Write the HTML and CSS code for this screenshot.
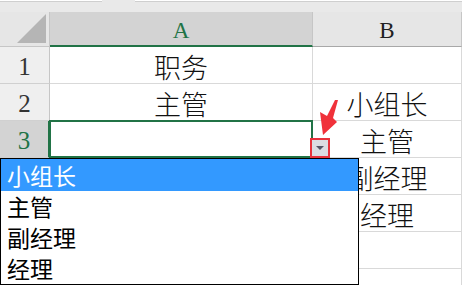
FILE: index.html
```html
<!DOCTYPE html>
<html>
<head>
<meta charset="utf-8">
<link rel="stylesheet" href="styles.css">
</head>
<body>
<div class="app">
  <div class="topstrip">
    <div class="box box-name"></div>
    <div class="box box-formula"></div>
  </div>
  <div class="sheet">
    <div class="corner"><div class="tri"></div></div>
    <div class="colhead sel">A</div>
    <div class="colhead">B</div>

    <div class="rowhead">1</div>
    <div class="cell a">职务</div>
    <div class="cell b"></div>

    <div class="rowhead">2</div>
    <div class="cell a">主管</div>
    <div class="cell b">小组长</div>

    <div class="rowhead sel">3</div>
    <div class="cell a active"></div>
    <div class="cell b">主管</div>

    <div class="rowhead">4</div>
    <div class="cell a"></div>
    <div class="cell b">副经理</div>

    <div class="rowhead">5</div>
    <div class="cell a"></div>
    <div class="cell b">经理</div>

    <div class="rowhead">6</div>
    <div class="cell a"></div>
    <div class="cell b"></div>

    <div class="rowhead">7</div>
    <div class="cell a"></div>
    <div class="cell b"></div>
  </div>

  <div class="dd-btn"><span class="caret"></span></div>
  <svg class="arrow" width="462" height="285" viewBox="0 0 462 285">
    <polygon points="338,100 333,118 337,122 323,135 320,112 327,116 335,100" fill="#f0313a"/>
  </svg>

  <ul class="dropdown">
    <li class="hl">小组长</li>
    <li>主管</li>
    <li>副经理</li>
    <li>经理</li>
  </ul>
</div>
</body>
</html>
```
FILE: styles.css
```css
html, body {
  margin: 0;
  padding: 0;
  background: #ffffff;
}
.app {
  position: relative;
  width: 462px;
  height: 285px;
  overflow: hidden;
  font-family: "Noto Sans CJK SC", sans-serif;
}
.topstrip {
  height: 12px;
  background: #e9e9e9;
  display: flex;
  gap: 33px;
  align-items: flex-start;
}
.box {
  height: 1px;
  background: #ffffff;
  border-bottom: 1px solid #cfcfcf;
}
.box-name { width: 102px; }
.box-formula { flex: 1; }

.sheet {
  display: grid;
  grid-template-columns: 50px 263px 149px;
  grid-template-rows: 35px repeat(7, 37px);
}
.corner {
  background: #e6e6e6;
  border-right: 1px solid #c6c6c6;
  border-bottom: 1px solid #c6c6c6;
  position: relative;
  box-sizing: border-box;
}
.tri {
  position: absolute;
  right: 3px;
  bottom: 3px;
  width: 0;
  height: 0;
  border-left: 29px solid transparent;
  border-bottom: 29px solid #b5b5b5;
}
.colhead {
  background: #e6e6e6;
  box-sizing: border-box;
  border-right: 1px solid #c6c6c6;
  border-bottom: 1px solid #a8a8a8;
  display: flex;
  align-items: center;
  justify-content: center;
  padding-top: 4px;
  font-family: "Liberation Serif", serif;
  font-size: 23px;
  color: #222;
}
.colhead.sel {
  background: #d3d3d3;
  border-bottom: 2px solid #217346;
  color: #217346;
}
.rowhead {
  background: #efefef;
  box-sizing: border-box;
  border-right: 1px solid #c6c6c6;
  border-bottom: 1px solid #d0d0d0;
  display: flex;
  align-items: center;
  justify-content: center;
  padding-top: 4px;
  font-family: "Liberation Serif", serif;
  font-size: 25px;
  color: #333;
}
.rowhead.sel {
  background: #d3d3d3;
  border-right: 2px solid #217346;
  color: #217346;
}
.cell {
  box-sizing: border-box;
  border-right: 1px solid #d9d9d9;
  border-bottom: 1px solid #d9d9d9;
  display: flex;
  align-items: flex-end;
  justify-content: center;
  font-size: 27px;
  line-height: 33px;
  color: #111;
  font-weight: 300;
}
.cell.active {
  border: 2px solid #217346;
  margin-left: -1px;
  margin-top: -1px;
}

.dd-btn {
  position: absolute;
  left: 310px;
  top: 138px;
  width: 20px;
  height: 20px;
  box-sizing: border-box;
  border: 2px solid #e8323c;
  background: #dcdce2;
  display: flex;
  align-items: center;
  justify-content: center;
}
.caret {
  width: 0;
  height: 0;
  border-left: 4px solid transparent;
  border-right: 4px solid transparent;
  border-top: 4px solid #555566;
}
.arrow {
  position: absolute;
  left: 0;
  top: 0;
}
.dropdown {
  position: absolute;
  left: 0;
  top: 158px;
  width: 359px;
  height: 127px;
  box-sizing: border-box;
  margin: 0;
  padding: 0;
  list-style: none;
  background: #ffffff;
  border: 1px solid #000;
  display: flex;
  flex-direction: column;
}
.dropdown li {
  height: 31px;
  line-height: 31px;
  padding-left: 6px;
  font-size: 23px;
  color: #000;
}
.dropdown li.hl {
  height: 32px;
  line-height: 32px;
  background: #3399ff;
  color: #ffffff;
}
```
